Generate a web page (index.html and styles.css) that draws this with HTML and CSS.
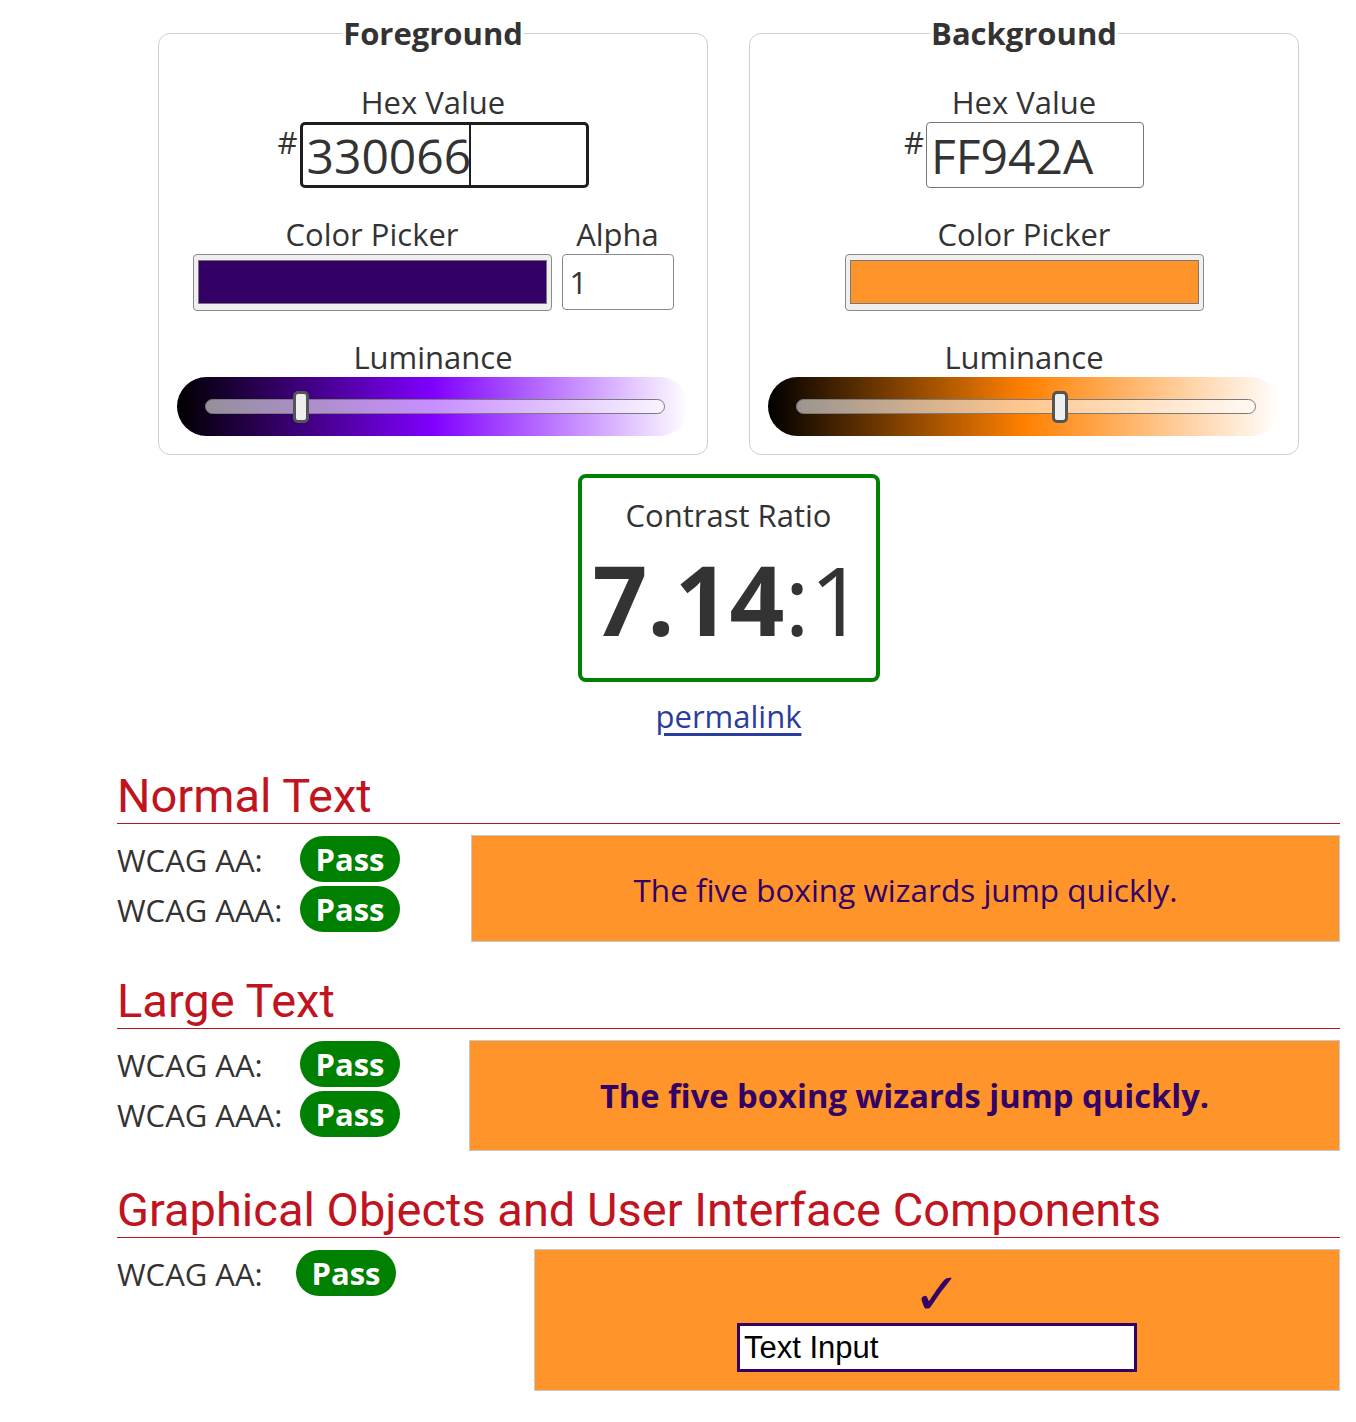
FILE: index.html
```html
<!DOCTYPE html>
<html lang="en">
<head>
<meta charset="utf-8">
<title>Contrast Checker</title>
<link rel="stylesheet" href="styles.css">
</head>
<body>
<main class="page">
  <div class="pickers">
    <fieldset class="panel">
      <legend class="panel-title">Foreground</legend>
      <div class="field-label field-label--hex">Hex Value</div>
      <div class="hex-row">
        <span class="hash">#</span>
        <span class="hex-wrap">
          <input class="hex-input hex-input--focus" type="text" value="330066">
          <span class="caret"></span>
        </span>
      </div>
      <div class="picker-row">
        <div class="picker-col">
          <div class="field-label">Color Picker</div>
          <div class="swatch-btn swatch-btn--fg"><div class="swatch swatch--fg"></div></div>
        </div>
        <div class="picker-col">
          <div class="field-label">Alpha</div>
          <input class="alpha-input" type="text" value="1">
        </div>
      </div>
      <div class="field-label field-label--lum">Luminance</div>
      <div class="lum lum--fg">
        <div class="track"><div class="thumb" style="left:19.1%"></div></div>
      </div>
    </fieldset>

    <fieldset class="panel">
      <legend class="panel-title">Background</legend>
      <div class="field-label field-label--hex">Hex Value</div>
      <div class="hex-row">
        <span class="hash">#</span>
        <span class="hex-wrap">
          <input class="hex-input hex-input--bg" type="text" value="FF942A">
        </span>
      </div>
      <div class="picker-row">
        <div class="picker-col">
          <div class="field-label">Color Picker</div>
          <div class="swatch-btn swatch-btn--bg"><div class="swatch swatch--bg"></div></div>
        </div>
      </div>
      <div class="field-label field-label--lum">Luminance</div>
      <div class="lum lum--bg">
        <div class="track"><div class="thumb" style="left:55.6%"></div></div>
      </div>
    </fieldset>
  </div>

  <div class="ratio-area">
    <div class="ratio-box">
      <div class="ratio-title">Contrast Ratio</div>
      <div class="ratio-value"><b>7.14</b>:1</div>
    </div>
    <a class="permalink" href="#">permalink</a>
  </div>

  <section class="result result--normal">
    <h2 class="result-title">Normal Text</h2>
    <div class="result-body">
      <div class="checks">
        <span class="check-label">WCAG AA:</span><span class="badge">Pass</span>
        <span class="check-label">WCAG AAA:</span><span class="badge">Pass</span>
      </div>
      <div class="sample sample--normal">The five boxing wizards jump quickly.</div>
    </div>
  </section>

  <section class="result result--large">
    <h2 class="result-title">Large Text</h2>
    <div class="result-body">
      <div class="checks">
        <span class="check-label">WCAG AA:</span><span class="badge">Pass</span>
        <span class="check-label">WCAG AAA:</span><span class="badge">Pass</span>
      </div>
      <div class="sample sample--large">The five boxing wizards jump quickly.</div>
    </div>
  </section>

  <section class="result result--ui">
    <h2 class="result-title">Graphical Objects and User Interface Components</h2>
    <div class="result-body">
      <div class="checks checks--ui">
        <span class="check-label">WCAG AA:</span><span class="badge">Pass</span>
      </div>
      <div class="sample sample--ui">
        <span class="tick">&#10003;</span>
        <input class="demo-input" type="text" value="Text Input">
      </div>
    </div>
  </section>
</main>
</body>
</html>
```

FILE: styles.css
```css
html, body {
  margin: 0;
  padding: 0;
  background: #fff;
}

body {
  font-family: "Open Sans", "Liberation Sans", sans-serif;
  color: #333;
}

.page {
  width: 1223px;
  margin-left: 117px;
  padding-top: 16px;
}

/* ---------- color panels ---------- */
.pickers {
  display: flex;
  justify-content: center;
  gap: 41px;
}

.panel {
  box-sizing: border-box;
  width: 550px;
  margin: 0;
  padding: 0 0 18px;
  border: 1px solid #cfcfcf;
  border-radius: 12px;
  min-width: 0;
}

.panel-title {
  margin: 0 auto;
  padding: 0 1px;
  font-weight: 700;
  font-size: 31px;
  line-height: 34px;
  color: #333;
}

.field-label {
  font-size: 31px;
  line-height: 40px;
  text-align: center;
  color: #333;
}

.field-label--hex {
  margin-top: 32px;
}

.hex-row {
  display: flex;
  justify-content: center;
  align-items: flex-start;
  margin-top: 0;
}

.hash {
  font-size: 31px;
  line-height: 30px;
  margin-top: 5px;
  margin-right: 2px;
}

.hex-wrap {
  position: relative;
  display: block;
}

.hex-input {
  display: block;
  box-sizing: border-box;
  height: 66px;
  margin: 0;
  padding: 0 4px;
  font-family: "Open Sans", sans-serif;
  font-size: 48px;
  color: #333;
  background: #fff;
  outline: none;
}

.hex-input--focus {
  width: 289px;
  border: 3px solid #1e1e1e;
  border-radius: 5px;
}

.hex-input--bg {
  width: 218px;
  border: 1px solid #767676;
  border-radius: 4px;
}

.caret {
  position: absolute;
  left: 169px;
  top: 3px;
  bottom: 3px;
  width: 2px;
  background: #1e1e1e;
}

.picker-row {
  display: flex;
  justify-content: center;
  align-items: flex-end;
  gap: 10px;
  margin-top: 26px;
}

.picker-col {
  display: flex;
  flex-direction: column;
  align-items: center;
}

.swatch-btn {
  box-sizing: border-box;
  width: 359px;
  height: 57px;
  padding: 5px 4px 6px;
  background: #efefef;
  border: 1px solid #8a8a8a;
  border-radius: 4px;
}

.swatch {
  box-sizing: border-box;
  height: 44px;
  border: 1px solid #777;
}

.swatch--fg { background: #330066; }
.swatch--bg { background: #ff942a; }

.alpha-input {
  display: block;
  box-sizing: border-box;
  width: 112px;
  height: 56px;
  margin: 0 0 1px;
  padding: 0 7px;
  border: 1px solid #8a8a8a;
  border-radius: 4px;
  font-family: "Open Sans", sans-serif;
  font-size: 31px;
  color: #333;
  background: #fff;
}

.field-label--lum {
  margin-top: 26px;
}

.lum {
  display: flex;
  align-items: center;
  height: 59px;
  margin: 0 18px;
  padding: 0 24px 0 28px;
  border-radius: 30px;
}

.lum--fg {
  background: linear-gradient(to right, #000 0%, #8000ff 50%, #fff 100%);
}

.lum--bg {
  background: linear-gradient(to right, #000 0%, #ff8000 50%, #fff 100%);
}

.track {
  position: relative;
  flex: 1;
  box-sizing: border-box;
  height: 15px;
  border: 1px solid #7a7a7a;
  border-radius: 8px;
  background: rgba(255, 255, 255, 0.56);
}

.thumb {
  position: absolute;
  top: -9px;
  box-sizing: border-box;
  width: 16px;
  height: 32px;
  background: #efefef;
  border: 3px solid #555;
  border-radius: 5px;
}

/* ---------- contrast ratio ---------- */
.ratio-area {
  display: flex;
  flex-direction: column;
  align-items: center;
  margin-top: 19px;
}

.ratio-box {
  box-sizing: border-box;
  width: 302px;
  height: 208px;
  padding-top: 17px;
  border: 4px solid #008000;
  border-radius: 8px;
  text-align: center;
}

.ratio-title {
  font-size: 31px;
  line-height: 40px;
}

.ratio-value {
  margin-top: 16px;
  font-size: 96px;
  line-height: 96px;
  color: #333;
}

.ratio-value b {
  font-weight: 700;
}

.permalink {
  margin-top: 14px;
  font-size: 31px;
  line-height: 40px;
  color: #2a3c9e;
  text-decoration: underline;
  text-underline-offset: 5px;
  text-decoration-thickness: 3px;
}

/* ---------- results ---------- */
.result {
  margin-top: 33px;
}

.result--large,
.result--ui {
  margin-top: 32px;
}

.result-title {
  margin: 0;
  font-family: Roboto, "Liberation Sans", sans-serif;
  font-weight: 400;
  font-size: 47px;
  line-height: 54px;
  color: #c0141f;
  border-bottom: 1px solid #b5161f;
}

.result-body {
  display: flex;
  align-items: flex-start;
  margin-top: 11px;
}

.checks {
  display: grid;
  grid-template-columns: 183px 100px;
  grid-auto-rows: 50px;
  flex: none;
}

.checks--ui {
  grid-template-columns: 179px 100px;
}

.check-label {
  font-size: 31px;
  line-height: 50px;
  color: #333;
  white-space: nowrap;
}

.badge {
  box-sizing: border-box;
  height: 46px;
  margin-top: 1px;
  border-radius: 23px;
  background: #008000;
  color: #fff;
  font-weight: 700;
  font-size: 31px;
  line-height: 46px;
  text-align: center;
}

.sample {
  flex: 1;
  box-sizing: border-box;
  display: flex;
  align-items: center;
  justify-content: center;
  background: #ff942a;
  border: 1px solid #c8c8c8;
  color: #330066;
}

.sample--normal {
  height: 107px;
  margin-left: 71px;
  font-size: 31.5px;
  line-height: 41px;
  padding-top: 2px;
}

.sample--large {
  height: 111px;
  margin-left: 69px;
  font-size: 32.7px;
  font-weight: 700;
  line-height: 46px;
}

.sample--ui {
  height: 142px;
  margin-left: 138px;
  flex-direction: column;
  justify-content: flex-start;
  padding-top: 16px;
}

.tick {
  font-family: "DejaVu Sans", sans-serif;
  font-size: 58px;
  line-height: 56px;
  color: #330066;
}

.demo-input {
  box-sizing: border-box;
  width: 400px;
  height: 49px;
  margin: 1px 0 0;
  padding: 0 4px;
  border: 3px solid #330066;
  background: #fff;
  font-family: "Liberation Sans", Arial, sans-serif;
  font-size: 31px;
  color: #000;
}
```
